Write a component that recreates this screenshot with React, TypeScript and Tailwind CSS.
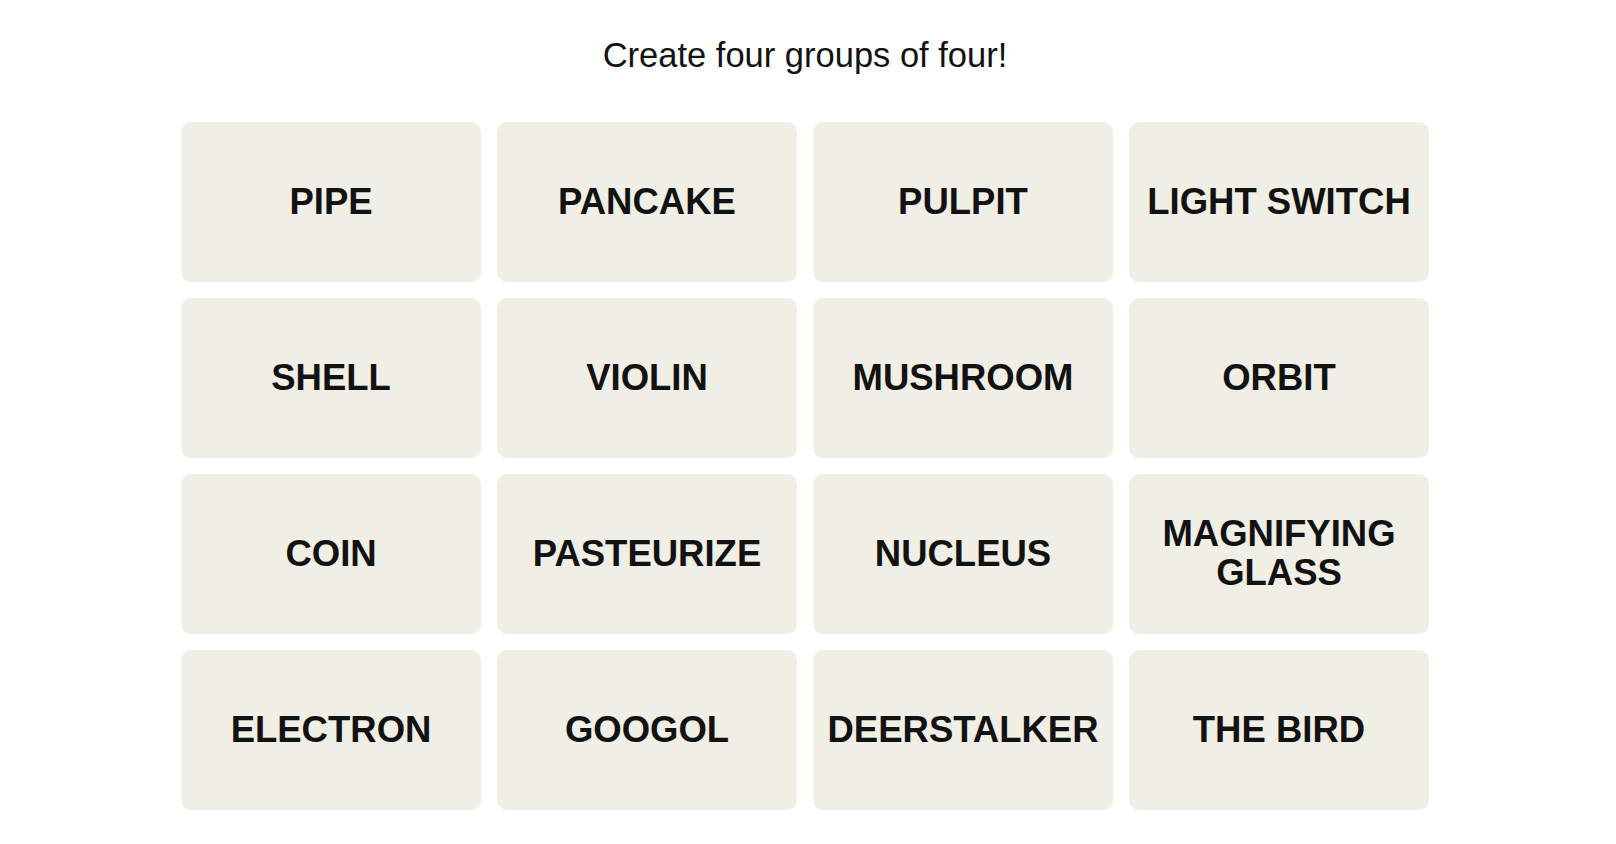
const words = [
  'PIPE',
  'PANCAKE',
  'PULPIT',
  'LIGHT SWITCH',
  'SHELL',
  'VIOLIN',
  'MUSHROOM',
  'ORBIT',
  'COIN',
  'PASTEURIZE',
  'NUCLEUS',
  'MAGNIFYING GLASS',
  'ELECTRON',
  'GOOGOL',
  'DEERSTALKER',
  'THE BIRD',
]

export default function App() {
  return (
    <main className="min-h-screen bg-white pl-[181px] pt-[35px] font-['Liberation_Sans',Arial,sans-serif] text-[#121212]">
      <div className="w-[1248px]">
        <h1 className="text-center text-[34.5px] font-normal leading-[40px]">Create four groups of four!</h1>

        <div className="mt-[47px] grid grid-cols-4 gap-4">
          {words.map((word) => (
            <button
              key={word}
              type="button"
              className="flex h-[160px] items-center justify-center rounded-[10px] bg-[#efefe6] px-4 pb-[2px] text-center text-[36.5px] font-bold leading-[39px] text-[#121212]"
            >
              {word}
            </button>
          ))}
        </div>
      </div>
    </main>
  )
}
